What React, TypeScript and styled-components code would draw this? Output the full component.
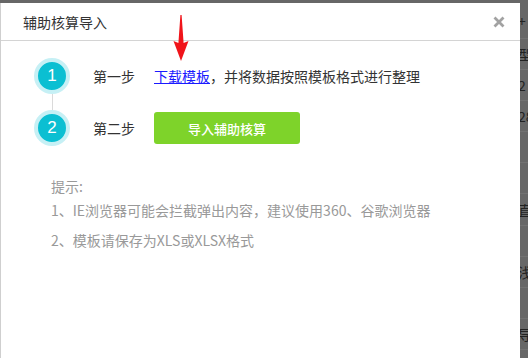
import { createGlobalStyle } from 'styled-components';
import styled from 'styled-components';

const GlobalStyle = createGlobalStyle`
	html,
	body {
		margin: 0;
		padding: 0;
		background: #676767;
		overflow: hidden;
	}
	body {
		font-family: 'Noto Sans CJK SC', 'Noto Sans', 'Liberation Sans', sans-serif;
	}
`;

const Screen = styled.div`
	display: flex;
	width: 528px;
	height: 358px;
	padding-top: 3px;
	box-sizing: border-box;
	overflow: hidden;
`;

const Dialog = styled.div`
	position: relative;
	width: 520px;
	flex-shrink: 0;
	height: 360px;
	background: #fff;
	border-left: 1px solid #cfcfcf;
	box-sizing: border-box;
`;

const Header = styled.div`
	display: flex;
	align-items: center;
	justify-content: space-between;
	height: 38px;
	padding: 0 15px 0 22px;
	border-bottom: 1px solid #d4d4d4;
	box-sizing: border-box;
`;

const Title = styled.h3`
	margin: 0;
	font-size: 14px;
	font-weight: normal;
	color: #333;
`;

const CloseBtn = styled.button`
	display: flex;
	align-items: center;
	justify-content: center;
	width: 12px;
	height: 12px;
	padding: 0;
	border: none;
	background: none;
	cursor: pointer;
`;

const Body = styled.div`
	padding: 17px 0 0 33px;
`;

const Steps = styled.div`
	display: flex;
	flex-direction: column;
`;

const StepRow = styled.div`
	display: flex;
	align-items: center;
	height: 36px;
`;

const Circle = styled.div`
	display: flex;
	align-items: center;
	justify-content: center;
	width: 36px;
	height: 36px;
	border-radius: 50%;
	border: 4px solid #c6f0f5;
	background: #0bbfd2;
	box-sizing: border-box;
	color: #fff;
	font-family: 'Liberation Sans', sans-serif;
	font-size: 17px;
	flex-shrink: 0;
`;

const Connector = styled.div`
	width: 1px;
	height: 16px;
	margin-left: 18px;
	background: #dadada;
`;

const StepLabel = styled.span`
	width: 61px;
	margin-left: 23px;
	font-size: 14px;
	color: #333;
`;

const StepText = styled.span`
	font-size: 14px;
	color: #333;

	a {
		color: #1a1aff;
		text-decoration: underline;
	}
`;

const ImportButton = styled.button`
	width: 146px;
	height: 32px;
	border: none;
	border-radius: 3px;
	background: #7ed32a;
	color: #fff;
	font-family: inherit;
	font-size: 13px;
	font-weight: 500;
	cursor: pointer;
`;

const Hint = styled.div`
	margin: 28px 0 0 17px;
	font-size: 14px;
	color: #999;
	line-height: 24px;

	p {
		margin: 0;
	}
	p + p + p {
		margin-top: 6px;
	}
`;

const Arrow = styled.svg`
	position: absolute;
	left: 172px;
	top: 12px;
`;

const Backdrop = styled.div`
	flex: 1;
	overflow: hidden;
	display: flex;
	flex-direction: column;
`;

const BackRow = styled.div<{ $h: number }>`
	height: ${p => p.$h}px;
	display: flex;
	align-items: center;
	border-bottom: 1px solid #727272;
	box-sizing: border-box;
	font-size: 14px;
	color: #222;
	white-space: nowrap;
	margin-left: -2px;
`;

const backRows: [number, string][] = [
	[36, '+'],
	[31, '型'],
	[31, '2'],
	[31, '28'],
	[31, ''],
	[31, ''],
	[32, '直'],
	[31, ''],
	[31, '浅'],
	[31, ''],
	[31, '导'],
];

export default function App(): JSX.Element {
	return (
		<>
			<GlobalStyle />
			<Screen>
				<Dialog>
					<Header>
						<Title>辅助核算导入</Title>
						<CloseBtn aria-label="关闭">
							<svg width="12" height="12" viewBox="0 0 12 12">
								<path
									d="M1.5 1.5 L10.5 10.5 M10.5 1.5 L1.5 10.5"
									stroke="#a2a2a2"
									strokeWidth="2.8"
									strokeLinecap="butt"
								/>
							</svg>
						</CloseBtn>
					</Header>
					<Body>
						<Steps>
							<StepRow>
								<Circle>1</Circle>
								<StepLabel>第一步</StepLabel>
								<StepText>
									<a href="#">下载模板</a>，并将数据按照模板格式进行整理
								</StepText>
							</StepRow>
							<Connector />
							<StepRow>
								<Circle>2</Circle>
								<StepLabel>第二步</StepLabel>
								<ImportButton>导入辅助核算</ImportButton>
							</StepRow>
						</Steps>
						<Hint>
							<p>提示:</p>
							<p>1、IE浏览器可能会拦截弹出内容，建议使用360、谷歌浏览器</p>
							<p>2、模板请保存为XLS或XLSX格式</p>
						</Hint>
					</Body>
					<Arrow width="16" height="46" viewBox="0 0 16 46">
						<polygon
							points="7.4,0 8.6,0 10.6,28 15.5,26 8,46 0.5,26 5.4,28"
							fill="#f0141a"
						/>
					</Arrow>
				</Dialog>
				<Backdrop>
					{backRows.map(([h, t], i) => (
						<BackRow key={i} $h={h}>
							{t}
						</BackRow>
					))}
				</Backdrop>
			</Screen>
		</>
	);
}
